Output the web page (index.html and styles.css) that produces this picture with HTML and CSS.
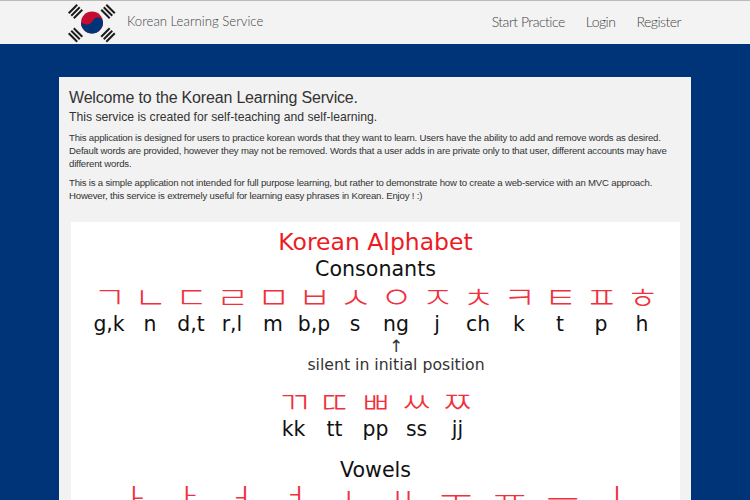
FILE: index.html
```html
<!DOCTYPE html>
<html lang="en">
<head>
    <meta charset="UTF-8">
    <meta name="viewport" content="width=device-width, initial-scale=1.0">
    <title>Korean Learning Service</title>
    <link rel="stylesheet" href="styles.css">
</head>
<body>
    <header class="navbar">
        <a class="brand" href="#">
            <svg class="flag" width="50" height="42" viewBox="0 0 50 42">
                <g fill="#1b1b1b">
                    <g transform="translate(7.5 9.5) rotate(-45)">
                        <rect x="-6" y="-4.6" width="12" height="2"/>
                        <rect x="-6" y="-1" width="12" height="2"/>
                        <rect x="-6" y="2.6" width="12" height="2"/>
                    </g>
                    <g transform="translate(40 9.5) rotate(45)">
                        <rect x="-6" y="-4.6" width="12" height="2"/>
                        <rect x="-6" y="-1" width="12" height="2"/>
                        <rect x="-6" y="2.6" width="12" height="2"/>
                    </g>
                    <g transform="translate(7.5 33) rotate(45)">
                        <rect x="-6" y="-4.6" width="12" height="2"/>
                        <rect x="-6" y="-1" width="12" height="2"/>
                        <rect x="-6" y="2.6" width="12" height="2"/>
                    </g>
                    <g transform="translate(40 33) rotate(-45)">
                        <rect x="-6" y="-4.6" width="12" height="2"/>
                        <rect x="-6" y="-1" width="12" height="2"/>
                        <rect x="-6" y="2.6" width="12" height="2"/>
                    </g>
                </g>
                <circle cx="24" cy="20.5" r="11" fill="#c60c30"/>
                <path d="M13 20.5a11 11 0 0 0 22 0c0-2.9-2.5-5-5.4-5-3.2 0-4.2 2.5-5.7 4.4-1.6 1.9-3.5 3-6 2.5-2.5-.5-3.8-1.3-4.9-1.9z" fill="#003478"/>
            </svg>
            <span class="brand-name">Korean Learning Service</span>
        </a>
        <nav class="nav-links">
            <a href="#">Start Practice</a>
            <a href="#">Login</a>
            <a href="#">Register</a>
        </nav>
    </header>

    <main class="card">
        <h1>Welcome to the Korean Learning Service.</h1>
        <h2>This service is created for self-teaching and self-learning.</h2>
        <p>This application is designed for users to practice korean words that they want to learn. Users have the ability to add and remove words as desired. Default words are provided, however they may not be removed. Words that a user adds in are private only to that user, different accounts may have different words.</p>
        <p>This is a simple application not intended for full purpose learning, but rather to demonstrate how to create a web-service with an MVC approach. However, this service is extremely useful for learning easy phrases in Korean. Enjoy ! :)</p>

        <section class="alphabet">
            <div class="title">Korean Alphabet</div>
            <div class="subtitle">Consonants</div>
            <div class="letters consonants">
                <span class="ko">ㄱ</span><span class="ko">ㄴ</span><span class="ko">ㄷ</span><span class="ko">ㄹ</span><span class="ko">ㅁ</span><span class="ko">ㅂ</span><span class="ko">ㅅ</span><span class="ko">ㅇ</span><span class="ko">ㅈ</span><span class="ko">ㅊ</span><span class="ko">ㅋ</span><span class="ko">ㅌ</span><span class="ko">ㅍ</span><span class="ko">ㅎ</span>
                <span>g,k</span><span>n</span><span>d,t</span><span>r,l</span><span>m</span><span>b,p</span><span>s</span><span>ng</span><span>j</span><span>ch</span><span>k</span><span>t</span><span>p</span><span>h</span>
            </div>
            <div class="note"><div class="arrow">↑</div>silent in initial position</div>
            <div class="letters doubles">
                <span class="ko">ㄲ</span><span class="ko">ㄸ</span><span class="ko">ㅃ</span><span class="ko">ㅆ</span><span class="ko">ㅉ</span>
                <span>kk</span><span>tt</span><span>pp</span><span>ss</span><span>jj</span>
            </div>
            <div class="subtitle vowels-title">Vowels</div>
            <div class="letters vowels">
                <span class="ko">ㅏ</span><span class="ko">ㅑ</span><span class="ko">ㅓ</span><span class="ko">ㅕ</span><span class="ko">ㅗ</span><span class="ko">ㅛ</span><span class="ko">ㅜ</span><span class="ko">ㅠ</span><span class="ko">ㅡ</span><span class="ko">ㅣ</span>
                <span>a</span><span>ya</span><span>eo</span><span>yeo</span><span>o</span><span>yo</span><span>u</span><span>yu</span><span>eu</span><span>i</span>
            </div>
        </section>
    </main>
</body>
</html>
```

FILE: styles.css
```css
body {
    margin: 0;
    background: #003478;
    font-family: 'Liberation Sans', Arial, sans-serif;
    color: #333;
}
a {
    text-decoration: none;
}
.navbar {
    height: 43px;
    display: flex;
    justify-content: space-between;
    align-items: center;
    padding: 0 69px 0 68px;
    background: #f3f3f3;
    border-top: 1px solid #bbb;
}
.brand {
    display: flex;
    align-items: center;
    gap: 9px;
    color: #444;
    font-family: Lato, sans-serif;
    font-size: 13.2px;
    font-weight: 300;
}
.brand-name {
    margin-bottom: 3px;
}
.flag {
    display: block;
}
.nav-links {
    display: flex;
    gap: 21px;
    margin-bottom: 3px;
    font-family: Lato, sans-serif;
    font-size: 14px;
    font-weight: 300;
    letter-spacing: -0.5px;
}
.nav-links a {
    color: #444;
}
.card {
    margin: 33px 59px 0;
    padding: 12px 11px 0 10px;
    background: #f2f2f2;
}
h1 {
    margin: 0;
    font-size: 16px;
    font-weight: normal;
    letter-spacing: -0.18px;
    line-height: 18px;
}
h2 {
    margin: 3px 0 0;
    font-size: 12.2px;
    font-weight: normal;
    line-height: 15px;
}
p {
    margin: 6px 0 0;
    font-size: 9.6px;
    letter-spacing: -0.19px;
    line-height: 13px;
}
p + p {
    margin-top: 6px;
}
.alphabet {
    margin: 20px 0 0 2px;
    padding: 5px 0 20px;
    background: #fff;
    font-family: 'DejaVu Sans', Verdana, sans-serif;
    color: #111;
    text-align: center;
}
.title {
    color: #ed1c24;
    font-size: 23.5px;
    line-height: 30px;
}
.subtitle {
    font-size: 20.6px;
    line-height: 24px;
}
.letters {
    display: grid;
    justify-content: center;
    font-size: 20.4px;
    line-height: 28px;
}
.consonants {
    grid-template-columns: repeat(14, 41px);
    margin-top: -1px;
}
.doubles {
    grid-template-columns: repeat(5, 41px);
    margin-top: 10px;
}
.vowels {
    grid-template-columns: repeat(10, 53.5px);
}
.ko {
    display: block;
    color: #f0303c;
    font-family: 'Noto Sans CJK KR', sans-serif;
    font-size: 30px;
    font-weight: 300;
    line-height: 30px;
    transform: scaleX(1.2);
}
.note {
    padding-left: 41px;
    font-size: 15.7px;
    line-height: 20px;
    color: #333;
}
.arrow {
    line-height: 17px;
    font-size: 17px;
}
.vowels-title {
    margin-top: 15px;
}
```
